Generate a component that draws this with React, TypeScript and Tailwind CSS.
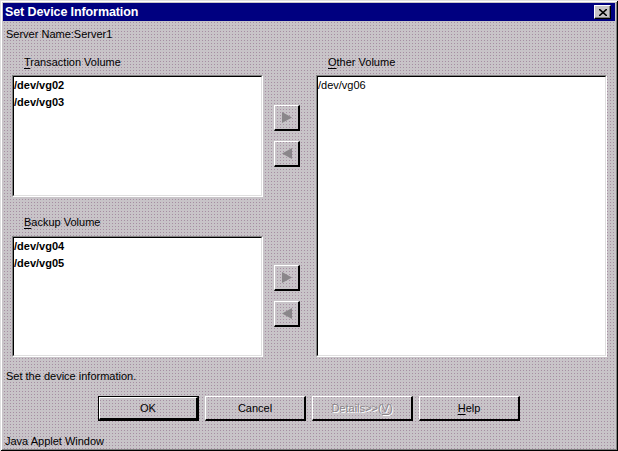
const font = "font-['Liberation_Sans',Arial,sans-serif]";

// dithered dialog background, Win95-ish
const dither =
  "bg-[#c8c4c8] bg-[radial-gradient(#a68ea2_0.7px,transparent_0.9px)] bg-[length:3px_3px]";

function Underlined({ ch }: { ch: string }) {
  return <span className="underline underline-offset-[2px]">{ch}</span>;
}

function ListBox({ items, bold, className }: { items: string[]; bold?: boolean; className: string }) {
  return (
    <div
      className={`bg-white border-t-[1px] border-l-[1px] border-t-[#808080] border-l-[#808080] border-b-[1px] border-r-[1px] border-b-white border-r-white ${className}`}
    >
      <div className="h-full border-t-[1px] border-l-[1px] border-t-black border-l-black border-b-[1px] border-r-[1px] border-b-[#dfdfdf] border-r-[#dfdfdf]">
        {items.map((it) => (
          <div key={it} className={`h-[17px] leading-[17px] text-[11px] text-black ${bold ? "font-bold" : ""}`}>
            {it}
          </div>
        ))}
      </div>
    </div>
  );
}

function ArrowButton({ dir, className }: { dir: "right" | "left"; className?: string }) {
  return (
    <div
      className={`w-[26px] h-[26px] flex items-center justify-center border-t-[1px] border-l-[1px] border-t-white border-l-white border-b-[2px] border-r-[2px] border-b-black border-r-black ${className || ""}`}
    >
      <svg width="10" height="11" viewBox="0 0 10 11">
        {dir === "right" ? (
          <polygon points="0,0 10,5.5 0,11" fill="#8a868a" />
        ) : (
          <polygon points="10,0 0,5.5 10,11" fill="#8a868a" />
        )}
      </svg>
    </div>
  );
}

function DialogButton({
  children,
  isDefault,
  disabled,
}: {
  children: React.ReactNode;
  isDefault?: boolean;
  disabled?: boolean;
}) {
  return (
    <div className={`w-[101px] h-[25px] ${isDefault ? "border border-black" : ""}`}>
      <div
        className={`h-full flex items-center justify-center border-t-[1px] border-l-[1px] border-t-white border-l-white border-b-[2px] border-r-[2px] border-b-black border-r-black text-[11px] ${
          disabled ? "text-[#8a868a] [text-shadow:1px_1px_0_#fff]" : "text-black"
        }`}
      >
        {children}
      </div>
    </div>
  );
}

export default function App() {
  return (
    <div
      className={`w-[618px] h-[451px] overflow-hidden ${dither} ${font} text-black shadow-[inset_1px_1px_#dfdfdf,inset_-1px_-1px_#000,inset_2px_2px_#fff,inset_-2px_-2px_#808080] pt-[3px] px-[3px] flex flex-col`}
    >
      {/* Title bar */}
      <div className="h-[18px] bg-[#000080] flex items-center justify-between pl-[2px] pr-[4px] shrink-0">
        <span className="text-white font-bold text-[12.5px] tracking-[-0.1px] leading-none">
          Set Device Information
        </span>
        <div className="w-[17px] h-[14px] bg-[#c6c3c6] flex items-center justify-center border-t-[1px] border-l-[1px] border-t-white border-l-white border-b-[1px] border-r-[1px] border-b-black border-r-black shadow-[inset_-1px_-1px_#808080]">
          <svg width="8" height="7" viewBox="0 0 8 7">
            <path d="M0 0 L8 7 M8 0 L0 7" stroke="black" strokeWidth="1.6" />
          </svg>
        </div>
      </div>

      <div className="mt-[6px] h-[14px] leading-[14px] text-[11px] pl-[3px]">Server Name:Server1</div>

      {/* Volumes */}
      <div className="mt-[14px] flex pl-[9px]">
        <div className="w-[251px] flex flex-col">
          <div className="h-[14px] leading-[14px] text-[11px] pl-[12px]">
            <Underlined ch="T" />ransaction Volume
          </div>
          <ListBox className="mt-[6px] h-[122px]" items={["/dev/vg02", "/dev/vg03"]} bold />
          <div className="mt-[18px] h-[14px] leading-[14px] text-[11px] pl-[12px]">
            <Underlined ch="B" />ackup Volume
          </div>
          <ListBox className="mt-[7px] h-[121px]" items={["/dev/vg04", "/dev/vg05"]} bold />
        </div>

        <div className="ml-[11px] w-[26px] flex flex-col">
          <ArrowButton dir="right" className="mt-[50px]" />
          <ArrowButton dir="left" className="mt-[10px]" />
          <ArrowButton dir="right" className="mt-[98px]" />
          <ArrowButton dir="left" className="mt-[10px]" />
        </div>

        <div className="ml-[16px] w-[291px] flex flex-col">
          <div className="h-[14px] leading-[14px] text-[11px] pl-[12px]">
            <Underlined ch="O" />ther Volume
          </div>
          <ListBox className="mt-[6px] h-[282px]" items={["/dev/vg06"]} />
        </div>
      </div>

      <div className="mt-[12px] h-[14px] leading-[14px] text-[11px] pl-[3px]">Set the device information.</div>

      {/* Buttons */}
      <div className="mt-[13px] flex justify-center gap-[6px]">
        <DialogButton isDefault>OK</DialogButton>
        <DialogButton>Cancel</DialogButton>
        <DialogButton disabled>
          Details&gt;&gt;(<Underlined ch="V" />)
        </DialogButton>
        <DialogButton>
          <Underlined ch="H" />elp
        </DialogButton>
      </div>

      <div className="mt-[13px] h-[14px] leading-[14px] text-[11px] pl-[2px]">Java Applet Window</div>
    </div>
  );
}
